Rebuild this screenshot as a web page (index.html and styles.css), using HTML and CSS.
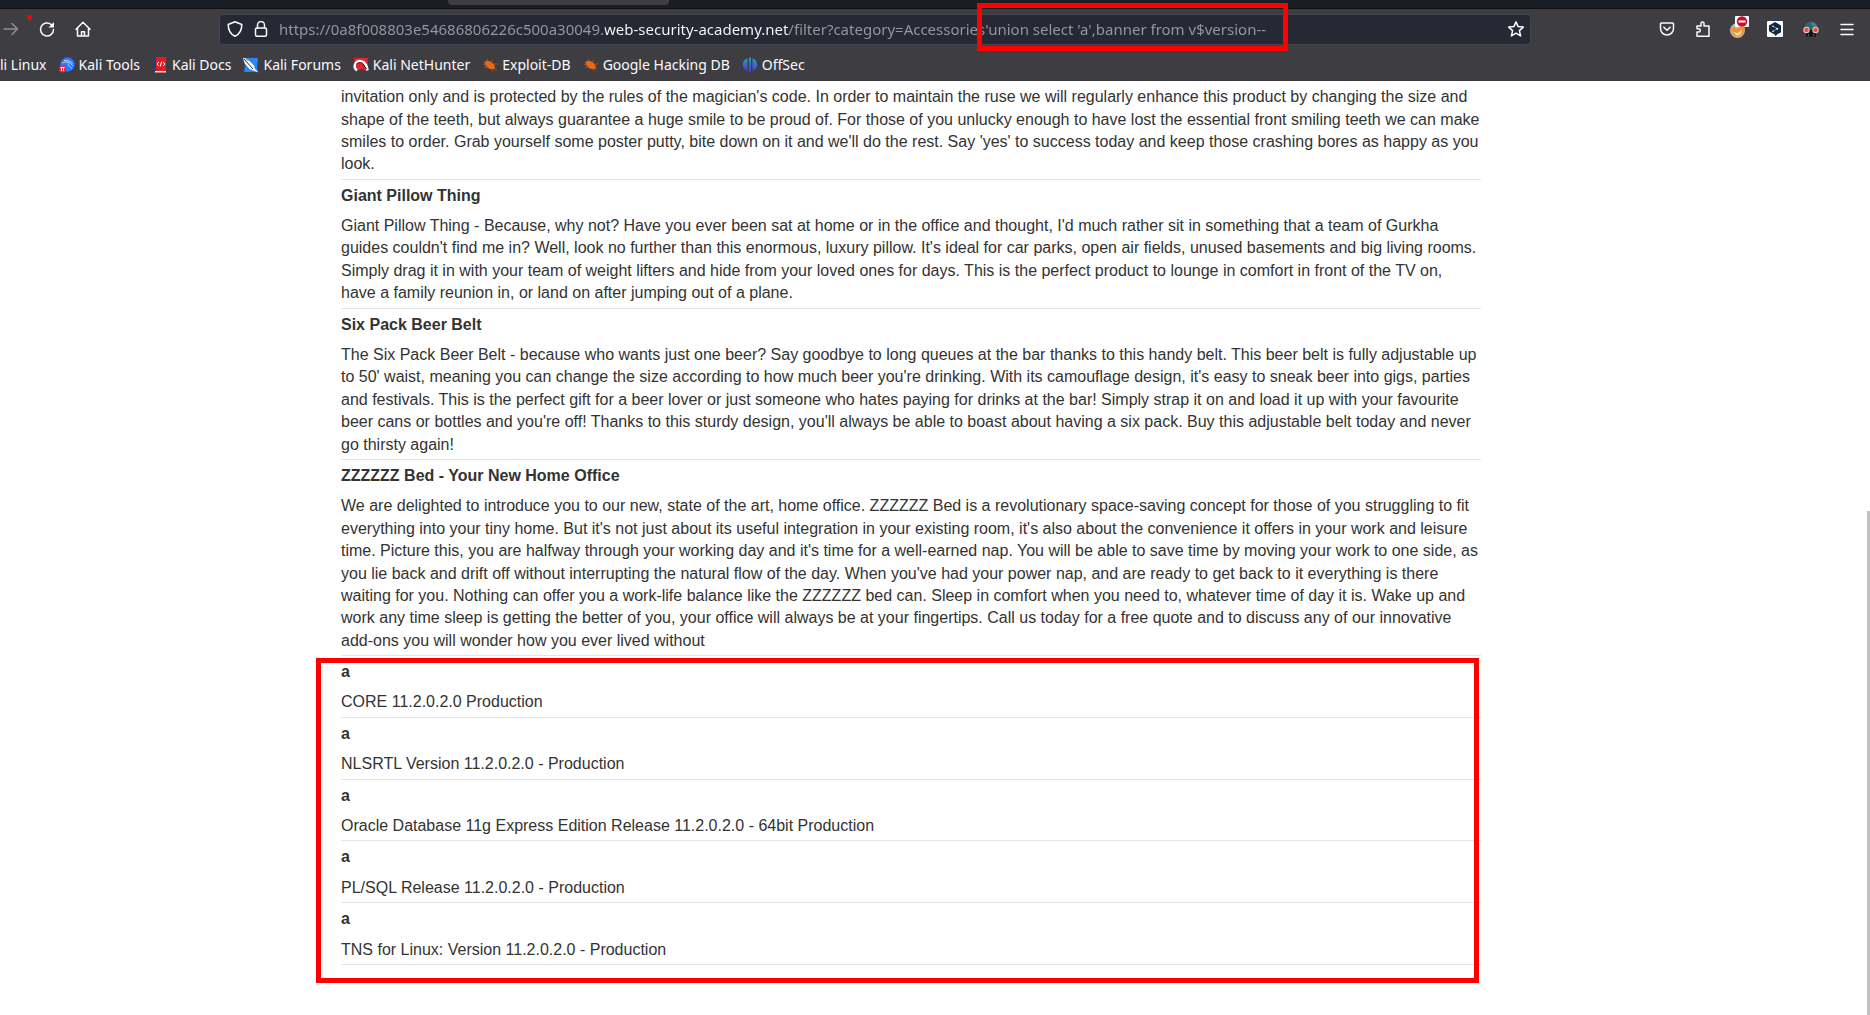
FILE: index.html
```html
<!DOCTYPE html>
<html lang="en">
<head>
<meta charset="utf-8">
<title>Accessories</title>
<link rel="stylesheet" href="styles.css">
</head>
<body>
<header class="chrome">
  <div class="tabstrip"><div class="tab"></div></div>
  <div class="navbar">
    <div class="nav-buttons">
      <button class="icon-button dim" aria-label="Forward"><svg class="line" width="16" height="16" viewBox="0 0 16 16"><path d="M1 8h13.500M9 2.500L14.500 8 9 13.500"/></svg></button>
      <button class="icon-button" aria-label="Reload"><svg class="line" width="16" height="16" viewBox="0 0 16 16"><path d="M14.500 8.500a6.500 6.500 0 1 1-2.200-4.900"/><path class="solid" d="M15 1v5.500H9.500z"/></svg></button>
      <button class="icon-button" aria-label="Home"><svg class="line" width="16" height="16" viewBox="0 0 16 16"><path d="M1 8.200L8 1.200l7 7M2.500 7v8h11V7M6.500 15v-4.200h3V15"/></svg></button>
      <span class="marker-dot"></span>
    </div>
    <form class="urlbar">
      <svg class="line" width="16" height="16" viewBox="0 0 16 16"><path d="M8 .8L14.800 3.500c0 5.700-1.800 9.500-6.800 11.800C3 13 1.200 9.200 1.200 3.500z"/></svg>
      <svg class="line" width="16" height="16" viewBox="0 0 16 16"><rect x="2.500" y="7" width="11" height="8.200" rx="1.500"/><path d="M4.500 7V4a3.500 3.500 0 0 1 7 0v3"/></svg>
      <div class="url-field">
        <input class="url" type="text" aria-label="Address" spellcheck="false" value="https://0a8f008803e54686806226c500a30049.web-security-academy.net/filter?category=Accessories'union select 'a',banner from v$version--">
        <span class="url-highlight"></span>
      </div>
      <button class="icon-button" type="button" aria-label="Bookmark this page"><svg class="line" width="16" height="16" viewBox="0 0 16 16"><path d="M8 .9l2.100 4.700 5.200.5-3.900 3.500 1.200 5.300L8 12.200l-4.600 2.700 1.200-5.300L.7 6.100l5.200-.5z"/></svg></button>
    </form>
    <div class="nav-buttons">
      <button class="icon-button" aria-label="Pocket"><svg class="line" width="16" height="16" viewBox="0 0 16 16"><path d="M2.500 2h11a1 1 0 0 1 1 1v4.500a6.500 6.500 0 0 1-13 0V3a1 1 0 0 1 1-1zM4.800 6.200L8 9.200l3.200-3"/></svg></button>
      <button class="icon-button" aria-label="Extensions"><svg class="line" width="16" height="16" viewBox="0 0 16 16"><path d="M2 15.200V11h1.700a1.500 1.500 0 0 0 0-3.200H2V5h4V2.500a1.500 1.500 0 0 1 3 0V5h5v10.200z"/></svg></button>
      <button class="icon-button" aria-label="Proxy switcher, off"><svg width="20" height="22" viewBox="0 0 20 22"><circle cx="8.500" cy="12.500" r="7.500" fill="#bdb8b0"/><path d="M0 12l5-3 3 2 6-5 2 6-3 5-5 2-5-3 1-3z" fill="#f0912d"/><path d="M4 14l5 1 4-4-1 5-4 2z" fill="#fbd9a0"/><rect x="6" y="-2" width="14" height="11" rx="1" fill="#fff"/><circle cx="13" cy="3.500" r="5.200" fill="#c8102e"/><rect x="9.500" y="2.500" width="7" height="2" fill="#fff"/></svg></button>
      <button class="icon-button" aria-label="DeepL"><svg width="16" height="16" viewBox="0 0 16 16"><rect width="16" height="16" rx="1" fill="#fff"/><path d="M8 1l6 3.400v6.800l-4 2.300-1.500 1.700L8 13.800l-6-3.600V4.400z" fill="#0f2b46"/><path d="M6 5.300l4.200 2.400L6 10.300" fill="none" stroke="#8fa1b4" stroke-width=".8"/><circle cx="10.200" cy="7.700" r="1" fill="#fff"/><circle cx="6" cy="5.300" r=".8" fill="#fff"/><circle cx="6" cy="10.300" r=".8" fill="#fff"/></svg></button>
      <button class="icon-button" aria-label="Tech profiler"><svg width="16" height="16" viewBox="0 0 16 16"><path d="M1.500 8C1.500 3.500 4 .8 8 .8S14.500 3.500 14.500 8z" fill="#2f6674"/><path d="M8 1c3.500 0 6 2.500 6.300 6L9 5z" fill="#3f8492"/><path d="M3 9h10v6.500H3z" fill="#101216"/><circle cx="3.500" cy="9" r="3.200" fill="#f0c9b8"/><circle cx="12.500" cy="9" r="3.200" fill="#f0c9b8"/><circle cx="3.500" cy="9" r="2.200" fill="#e0523c"/><circle cx="12.500" cy="9" r="2.200" fill="#e0523c"/><path d="M5.500 15v-2M10.500 15v-2" stroke="#3a7482"/></svg></button>
      <button class="icon-button" aria-label="Menu"><svg class="line" width="16" height="16" viewBox="0 0 16 16"><path d="M2 3.500h12M2 8.500h12M2 13.500h12"/></svg></button>
    </div>
  </div>
  <nav class="bookmarks" aria-label="Bookmarks">
    <a href="#">li Linux</a>
    <a href="#"><svg width="16" height="16" viewBox="0 0 16 16"><circle cx="8.500" cy="7.500" r="7.200" fill="#2777ff"/><path d="M3 6c4-2 8-1 11 3M5 3.500c3-.5 6 .5 8.500 3M9 6.500c0 2 2 3 4 5" fill="none" stroke="#bcd8ff"/><circle cx="3.500" cy="12" r="3.500" fill="#e52a38"/><path d="M1.500 10.500h4M2.500 10.500v3.500M4.500 10.500v3.500" stroke="#fff" fill="none"/></svg>Kali Tools</a>
    <a href="#"><svg width="16" height="16" viewBox="0 0 16 16"><path d="M2 1h2v14H2z" fill="#1b3f8b"/><path d="M4 0h10v14H4z" fill="#e01b22"/><path d="M3 14h11v1.500H3z" fill="#f4d9d9"/><path d="M6.800 5L5 7l1.800 2M11.200 5L13 7l-1.800 2M9.800 4.500l-1.600 5" stroke="#fff" fill="none"/></svg>Kali Docs</a>
    <a href="#"><svg width="16" height="16" viewBox="0 0 16 16"><path d="M1 1h14l-1 9 1 5H1l1-6z" fill="#2a86f3"/><path d="M0 1l4 .5 7 7 1 3.500 3.500 3.500-5-2-4-1.500-5-6z" fill="#fff"/><path d="M1 2l9 10M3 1.500l2 2" stroke="#1c2733" fill="none"/></svg>Kali Forums</a>
    <a href="#"><svg width="16" height="16" viewBox="0 0 16 16"><path d="M1 1h14l-1 13-5-2-7 2z" fill="#e3242f"/><path d="M4 13.500C-1 10 3 2 9 4.500c3 1 5 5 5.500 9" fill="none" stroke="#fff" stroke-width="2.500"/><path d="M3 7.500c2-2 5-3 7-.5l3.500 5" fill="none" stroke="#2a1015" stroke-width="1"/></svg>Kali NetHunter</a>
    <a href="#"><svg width="16" height="16" viewBox="0 0 16 16"><path d="M2.500 5C5 2.500 9 4 12 7.500c1.500 2.500 1 4.500-1 4.500-4 .5-9-2.500-8.500-7z" fill="#ee6611"/><path d="M1 7.500l3-.5M2 11l4-1.500M5 1.500l1 3M10 2.500v3M12 7l3.500 0M10 12l1 2.500M12.500 11l2 2.500" stroke="#9b5027" fill="none"/></svg>Exploit-DB</a>
    <a href="#"><svg width="16" height="16" viewBox="0 0 16 16"><path d="M2.500 5C5 2.500 9 4 12 7.500c1.500 2.500 1 4.500-1 4.500-4 .5-9-2.500-8.500-7z" fill="#ee6611"/><path d="M1 7.500l3-.5M2 11l4-1.500M5 1.500l1 3M10 2.500v3M12 7l3.500 0M10 12l1 2.500M12.500 11l2 2.500" stroke="#9b5027" fill="none"/></svg>Google Hacking DB</a>
    <a href="#"><svg width="16" height="16" viewBox="0 0 16 16"><defs><linearGradient id="offsec" x2="0" y2="1"><stop stop-color="#1aa7b8"/><stop offset="1" stop-color="#5b2be0"/></linearGradient></defs><path d="M5.500 1.200v12.500C2.500 13 .8 10.500.8 7.500S2.500 2 5.500 1.200zM7 .5h2v15H7zM10.500 1.200c3 .8 4.700 3.300 4.700 6.300s-1.700 5.500-4.700 6.200z" fill="url(#offsec)"/></svg>OffSec</a>
  </nav>
</header>

<main class="viewport">
  <div class="container">
    <table class="products">
      <tbody>
        <tr><td>invitation only and is protected by the rules of the magician's code. In order to maintain the ruse we will regularly enhance this product by changing the size and shape of the teeth, but always guarantee a huge smile to be proud of. For those of you unlucky enough to have lost the essential front smiling teeth we can make smiles to order. Grab yourself some poster putty, bite down on it and we'll do the rest. Say 'yes' to success today and keep those crashing bores as happy as you look.</td></tr>
        <tr><th>Giant Pillow Thing</th></tr>
        <tr><td>Giant Pillow Thing - Because, why not? Have you ever been sat at home or in the office and thought, I'd much rather sit in something that a team of Gurkha guides couldn't find me in? Well, look no further than this enormous, luxury pillow. It's ideal for car parks, open air fields, unused basements and big living rooms. Simply drag it in with your team of weight lifters and hide from your loved ones for days. This is the perfect product to lounge in comfort in front of the TV on, have a family reunion in, or land on after jumping out of a plane.</td></tr>
        <tr><th>Six Pack Beer Belt</th></tr>
        <tr><td>The Six Pack Beer Belt - because who wants just one beer? Say goodbye to long queues at the bar thanks to this handy belt. This beer belt is fully adjustable up to 50' waist, meaning you can change the size according to how much beer you're drinking. With its camouflage design, it's easy to sneak beer into gigs, parties and festivals. This is the perfect gift for a beer lover or just someone who hates paying for drinks at the bar! Simply strap it on and load it up with your favourite beer cans or bottles and you're off! Thanks to this sturdy design, you'll always be able to boast about having a six pack. Buy this adjustable belt today and never go thirsty again!</td></tr>
        <tr><th>ZZZZZZ Bed - Your New Home Office</th></tr>
        <tr><td>We are delighted to introduce you to our new, state of the art, home office. ZZZZZZ Bed is a revolutionary space-saving concept for those of you struggling to fit everything into your tiny home. But it's not just about its useful integration in your existing room, it's also about the convenience it offers in your work and leisure time. Picture this, you are halfway through your working day and it's time for a well-earned nap. You will be able to save time by moving your work to one side, as you lie back and drift off without interrupting the natural flow of the day. When you've had your power nap, and are ready to get back to it everything is there waiting for you. Nothing can offer you a work-life balance like the ZZZZZZ bed can. Sleep in comfort when you need to, whatever time of day it is. Wake up and work any time sleep is getting the better of you, your office will always be at your fingertips. Call us today for a free quote and to discuss any of our innovative add-ons you will wonder how you ever lived without</td></tr>
      </tbody>
      <tbody class="injected">
        <tr><th>a</th></tr>
        <tr><td>CORE 11.2.0.2.0 Production</td></tr>
        <tr><th>a</th></tr>
        <tr><td>NLSRTL Version 11.2.0.2.0 - Production</td></tr>
        <tr><th>a</th></tr>
        <tr><td>Oracle Database 11g Express Edition Release 11.2.0.2.0 - 64bit Production</td></tr>
        <tr><th>a</th></tr>
        <tr><td>PL/SQL Release 11.2.0.2.0 - Production</td></tr>
        <tr><th>a</th></tr>
        <tr><td>TNS for Linux: Version 11.2.0.2.0 - Production</td></tr>
      </tbody>
    </table>
  </div>
  <div class="scroll-thumb"></div>
</main>
</body>
</html>
```
FILE: styles.css
```css
* { box-sizing: border-box; }

body {
  margin: 0;
  height: 100vh;
  display: flex;
  flex-direction: column;
  background: #fff;
}

/* Browser chrome */
.chrome {
  flex: none;
  position: relative;
  z-index: 1;
  background: #3d3d42;
  border-bottom: 1px solid #38383d;
  color: #fbfbfe;
  font: 14px/20px "Noto Sans", sans-serif;
}

.tabstrip {
  height: 9px;
  padding-left: 448px;
  background: #1a1d24;
  border-bottom: 1px solid #0f1114;
}

.tab {
  width: 221px;
  height: 5px;
  border-radius: 0 0 4px 4px;
  background: #3d3d42;
}

.navbar {
  display: flex;
  align-items: center;
  height: 40px;
  margin-left: -7px;
  padding-right: 5px;
}

.nav-buttons {
  position: relative;
  display: flex;
}

.icon-button {
  display: flex;
  flex: none;
  align-items: center;
  justify-content: center;
  width: 36px;
  height: 32px;
  padding: 0;
  border: 0;
  background: none;
  color: inherit;
}

.icon-button svg { overflow: visible; }
.dim { color: #8f8f94; }

.line {
  flex: none;
  fill: none;
  stroke: currentColor;
  stroke-width: 1.5;
  stroke-linejoin: round;
  stroke-linecap: round;
}

.line .solid { fill: currentColor; stroke: none; }

.marker-dot {
  position: absolute;
  left: 34px;
  top: 2px;
  width: 5px;
  height: 5px;
  border-radius: 50%;
  background: #f00;
}

.urlbar {
  flex: 1;
  display: flex;
  align-items: center;
  gap: 10px;
  height: 31px;
  margin: 0 118px;
  padding-left: 7px;
  border: 1px solid #45454f;
  border-radius: 4px;
  background: #262834;
}

.urlbar .icon-button { width: 28px; height: 28px; }

.url-field {
  position: relative;
  flex: 1;
}

/* The registered domain is brighter than the rest of the address */
.url {
  display: block;
  width: 100%;
  padding: 0;
  border: 0;
  outline: 0;
  font: 15px/20px "Noto Sans", sans-serif;
  color: #98989f;
  -webkit-text-fill-color: transparent;
  background: linear-gradient(90deg, #98989f 326px, #fbfbfe 326px, #fbfbfe 510px, #98989f 510px);
  -webkit-background-clip: text;
  background-clip: text;
}

.url-highlight {
  position: absolute;
  left: 698px;
  top: -16px;
  width: 311px;
  height: 48px;
  border: 5px solid #f00;
}

.bookmarks {
  display: flex;
  align-items: center;
  gap: 12px;
  height: 31px;
}

.bookmarks a {
  display: flex;
  align-items: center;
  gap: 4px;
  color: inherit;
  text-decoration: none;
  white-space: nowrap;
}

/* Page, scrolled to its end */
.viewport {
  position: relative;
  flex: 1;
  min-height: 0;
  overflow: hidden;
  display: flex;
  flex-direction: column;
  justify-content: flex-end;
  padding: 0 48px 50px 0;
  font: 16px/1.4 "Liberation Sans", Arial, sans-serif;
  color: #333332;
}

.container {
  width: 100%;
  max-width: 1140px;
  margin: 0 auto;
}

.products {
  width: 100%;
  border-collapse: separate;
  border-spacing: 0;
}

.products th,
.products td {
  padding: 5px 0 3px;
  text-align: left;
}

.products td { border-bottom: 1px solid #e4e4e4; }

.injected { position: relative; }

.injected::after {
  content: "";
  position: absolute;
  left: -25px;
  right: 2px;
  top: 2px;
  bottom: -18px;
  border: 5px solid #f00;
}

.scroll-thumb {
  position: absolute;
  right: 0;
  bottom: 0;
  width: 3px;
  height: 54%;
  background: #c1c1c1;
}
```
